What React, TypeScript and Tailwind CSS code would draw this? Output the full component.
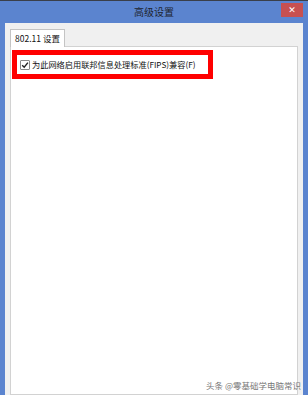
import React from "react";

const cjk = { fontFamily: '"Noto Sans CJK SC", "Noto Sans", sans-serif' };

export default function App() {
  return (
    <div
      className="relative w-[308px] h-[395px] overflow-hidden bg-[#5b84cf] border-t border-[#3a3f4a] flex flex-col"
      style={cjk}
    >
      {/* Title bar */}
      <div className="relative h-[22px] shrink-0 flex items-center justify-center">
        <span className="text-[10px] leading-none text-[#1e2430]">高级设置</span>
        <div className="absolute right-[5px] top-[2px] w-[22px] h-[14px] bg-[#c75050] flex items-center justify-center">
          <span className="text-white text-[9px] font-bold leading-none" style={{ fontFamily: '"DejaVu Sans", sans-serif' }}>
            ✕
          </span>
        </div>
      </div>

      {/* Body */}
      <div className="flex-1 mx-[5px] bg-[#f0f0f0] pt-[6px] px-[5px] flex flex-col">
        {/* Tabs */}
        <div className="flex h-[17px] shrink-0">
          <div className="relative z-10 w-[55px] h-[18px] bg-white border border-b-0 border-[#c4c4c4] flex items-center justify-center">
            <span className="text-[8.5px] leading-none text-[#111]">802.11 设置</span>
          </div>
        </div>

        {/* Panel */}
        <div className="flex-1 bg-white border border-[#d2d2d2] pt-[3px] pl-[1px]">
          <div className="w-[201px] h-[29px] border-[5px] border-[#ff0000] flex items-center pl-[3px]">
            <div className="w-[10px] h-[10px] border border-[#8a8a8a] bg-white rounded-[1px] flex items-center justify-center">
              <svg width="8" height="8" viewBox="0 0 8 8">
                <path d="M1.2 4.2 L3.2 6.2 L6.9 1.6" fill="none" stroke="#222" strokeWidth="1.4" />
              </svg>
            </div>
            <span className="ml-[2px] text-[8.2px] leading-none text-[#111] whitespace-nowrap">
              为此网络启用联邦信息处理标准(FIPS)兼容(F)
            </span>
          </div>
        </div>
      </div>

      {/* Watermark */}
      <div className="absolute right-[7px] bottom-[6px] text-[8.5px] leading-none text-[#777] whitespace-nowrap">
        头条 @零基础学电脑常识
      </div>
    </div>
  );
}
